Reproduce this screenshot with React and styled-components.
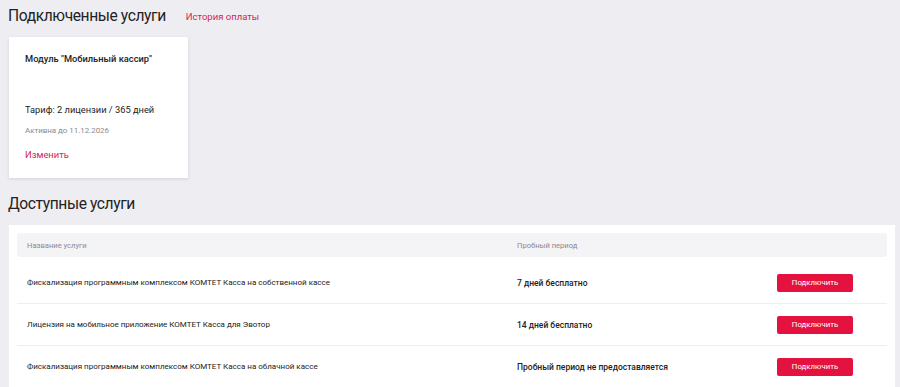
import React from "react";
import styled, { createGlobalStyle } from "styled-components";

const GlobalStyle = createGlobalStyle`
  body {
    margin: 0;
    background: #eeeef2;
    font-family: Roboto, "Liberation Sans", Arial, sans-serif;
    color: #222;
  }
`;

const services = [
  { name: "Фискализация программным комплексом КОМТЕТ Касса на собственной кассе", trial: "7 дней бесплатно" },
  { name: "Лицензия на мобильное приложение КОМТЕТ Касса для Эвотор", trial: "14 дней бесплатно" },
  { name: "Фискализация программным комплексом КОМТЕТ Касса на облачной кассе", trial: "Пробный период не предоставляется" },
];

function App() {
  return (
    <Page>
      <GlobalStyle />
      <TitleRow>
        <Title>Подключенные услуги</Title>
        <Link href="#">История оплаты</Link>
      </TitleRow>

      <Card>
        <CardTitle>Модуль "Мобильный кассир"</CardTitle>
        <Tariff>Тариф: 2 лицензии / 365 дней</Tariff>
        <Active>Активна до 11.12.2026</Active>
        <Link href="#" $size="9.4px">Изменить</Link>
      </Card>

      <SectionTitle>Доступные услуги</SectionTitle>

      <Panel>
        <HeadRow>
          <HeadCell>Название услуги</HeadCell>
          <HeadCell>Пробный период</HeadCell>
          <HeadCell />
        </HeadRow>
        {services.map((s) => (
          <Row key={s.name}>
            <Name>{s.name}</Name>
            <Trial>{s.trial}</Trial>
            <Action>
              <Button>Подключить</Button>
            </Action>
          </Row>
        ))}
      </Panel>
    </Page>
  );
}

const Page = styled.div`
  padding: 6px 5px 0 9px;
`;

const TitleRow = styled.div`
  display: flex;
  align-items: center;
  gap: 20px;
  height: 20px;
`;

const Title = styled.h1`
  margin: 0 0 0 -1px;
  font-size: 15.6px;
  line-height: 20px;
  letter-spacing: -0.4px;
  font-weight: 400;
  color: #222;
`;

const Link = styled.a`
  display: block;
  color: #d42452;
  text-decoration: none;
  font-size: ${(p) => p.$size || "9.5px"};
  line-height: 14px;
  margin-top: 1px;
`;

const Card = styled.div`
  width: 179px;
  height: 141px;
  box-sizing: border-box;
  margin-top: 11px;
  padding: 15px 16px 0 16px;
  background: #fff;
  box-shadow: 0 1px 3px rgba(0, 0, 0, 0.12);
  display: flex;
  flex-direction: column;
`;

const CardTitle = styled.div`
  font-size: 9.3px;
  line-height: 14px;
  font-weight: 500;
  color: #222;
  height: 51px;
`;

const Tariff = styled.div`
  font-size: 9.3px;
  line-height: 14px;
  color: #222;
  margin-bottom: 8px;
`;

const Active = styled.div`
  font-size: 7.9px;
  line-height: 12px;
  color: #8a8a8e;
  margin-bottom: 10px;
`;

const SectionTitle = styled.h2`
  margin: 16px 0 11px -1px;
  font-size: 15.6px;
  font-weight: 400;
  letter-spacing: -0.4px;
  color: #222;
  line-height: 20px;
`;

const Panel = styled.div`
  background: #fff;
  padding: 8px 8px 0 8px;
`;

const grid = `
  display: grid;
  grid-template-columns: 490px 260px 1fr;
  align-items: center;
`;

const HeadRow = styled.div`
  ${grid}
  height: 24px;
  background: #f4f4f6;
  border-radius: 3px;
  padding: 0 10px;
  margin-bottom: 5px;
`;

const HeadCell = styled.div`
  font-size: 7.6px;
  color: #8a8a8e;
`;

const Row = styled.div`
  ${grid}
  height: 41px;
  padding: 0 10px;
  border-bottom: 1px solid #efeff2;
`;

const Name = styled.div`
  font-size: 8px;
  color: #222;
`;

const Trial = styled.div`
  font-size: 8.5px;
  font-weight: 500;
  color: #222;
`;

const Action = styled.div`
  display: flex;
`;

const Button = styled.button`
  width: 76px;
  height: 18px;
  padding: 0;
  border: none;
  border-radius: 2px;
  background: #e4123f;
  color: #fff;
  font-family: inherit;
  font-size: 7.8px;
  cursor: pointer;
`;

export default App;
